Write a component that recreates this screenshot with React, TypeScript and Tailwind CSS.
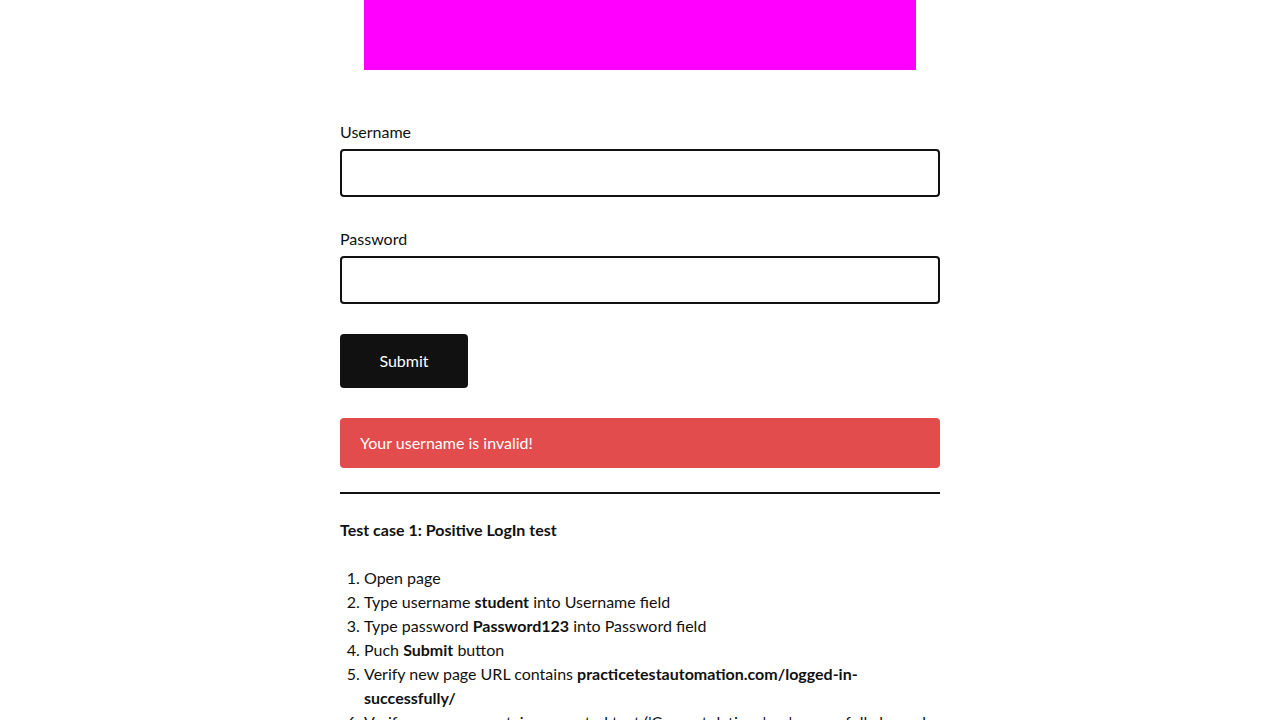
export default function App() {
  return (
    <div className="min-h-screen bg-white text-[#111] font-['Lato','Noto_Sans',sans-serif] text-base leading-6">
      <div className="mx-auto w-[600px]">
        <div className="mx-auto h-[70px] w-[552px] bg-[#ff00ff]" />

        <form className="mt-[50px] flex flex-col" onSubmit={(e) => e.preventDefault()}>
          <label className="block h-6 text-[#111]">Username</label>
          <input
            type="text"
            className="mt-[5px] h-12 w-full rounded border-2 border-[#111] px-3 outline-none"
          />

          <label className="mt-[30px] block h-6 text-[#111]">Password</label>
          <input
            type="password"
            className="mt-[5px] h-12 w-full rounded border-2 border-[#111] px-3 outline-none"
          />

          <button
            type="submit"
            className="mt-[30px] h-[54px] w-32 rounded bg-[#111] text-white"
          >
            Submit
          </button>
        </form>

        <div className="mt-[30px] flex h-[50px] items-center rounded bg-[#e34c4c] px-5 text-white">
          Your username is invalid!
        </div>

        <hr className="mt-6 border-0 border-t-2 border-[#111]" />

        <p className="mt-6 font-bold">Test case 1: Positive LogIn test</p>

        <ol className="mt-6 list-decimal pl-6">
          <li>Open page</li>
          <li>
            Type username <strong>student</strong> into Username field
          </li>
          <li>
            Type password <strong>Password123</strong> into Password field
          </li>
          <li>
            Puch <strong>Submit</strong> button
          </li>
          <li>
            Verify new page URL contains <strong>practicetestautomation.com/logged-in-successfully/</strong>
          </li>
          <li>
            Verify new page contains expected text ('Congratulations' or 'successfully logged in')
          </li>
          <li>
            Verify button <strong>Log out</strong> is displayed on the new page
          </li>
        </ol>
      </div>
    </div>
  )
}
